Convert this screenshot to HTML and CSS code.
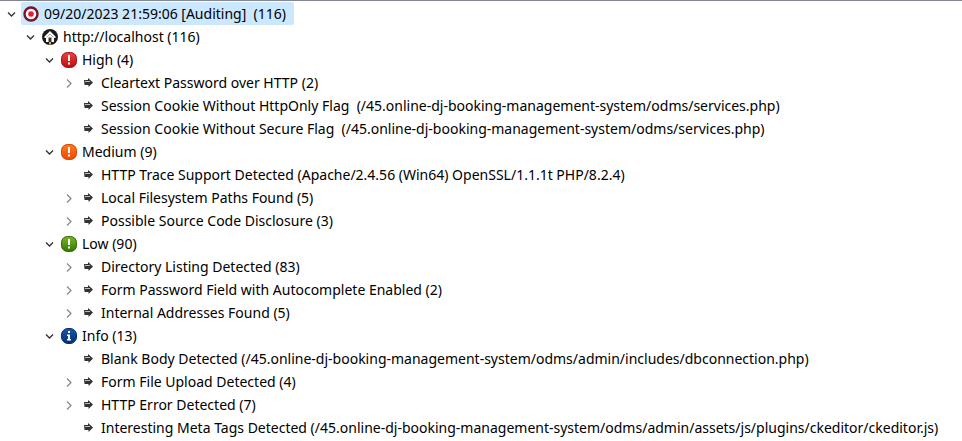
FILE: index.html
```html
<!DOCTYPE html>
<html lang="en">
<head>
<meta charset="utf-8">
<title>Scan Alerts</title>
<link rel="stylesheet" href="styles.css">
</head>
<body>
<svg class="sprite" aria-hidden="true">
  <defs>
    <linearGradient id="fade-red" x2="0" y2="1"><stop offset="0" stop-color="#f5403c"/><stop offset="1" stop-color="#b80e13"/></linearGradient>
    <linearGradient id="fade-orange" x2="0" y2="1"><stop offset="0" stop-color="#ff7a20"/><stop offset="1" stop-color="#ee4a02"/></linearGradient>
    <linearGradient id="fade-green" x2="0" y2="1"><stop offset="0" stop-color="#7cb52c"/><stop offset="1" stop-color="#327800"/></linearGradient>
    <linearGradient id="fade-blue" x2="0" y2="1"><stop offset="0" stop-color="#1a58a8"/><stop offset="1" stop-color="#032f79"/></linearGradient>
  </defs>
  <symbol id="open" viewBox="0 0 19 16"><path d="M6 6.5 9.5 10 13 6.5" fill="none" stroke="#303030" stroke-width="1.3"/></symbol>
  <symbol id="closed" viewBox="0 0 19 16"><path d="M8 4.5 12 8.5 8 12.5" fill="none" stroke="#8a8a8a" stroke-width="1.3"/></symbol>
  <symbol id="target" viewBox="0 0 16 16"><circle cx="8" cy="8" r="6.5" fill="#fff" stroke="#7d1022" stroke-width="2.4"/><circle cx="8" cy="8" r="2.8" fill="#e31b38"/></symbol>
  <symbol id="home" viewBox="0 0 16 16"><circle cx="8" cy="8" r="8" fill="#1b1b1b"/><path d="M8 2 2.5 7.5V9H4v4h8V9h1.5V7.5z" fill="#fff"/><path d="M4.5 8.5 8 5l3.5 3.5" fill="none" stroke="#999" stroke-width=".8"/><path d="M6.500 8.500h3V13h-3z" fill="#333"/><path d="M7 13h2v2.500H7z" fill="#f0a040"/></symbol>
  <symbol id="high" viewBox="0 0 16 16"><rect x=".5" y=".5" width="15" height="15" rx="6" fill="url(#fade-red)" stroke="#a40d14"/><path d="M7 3h2v6H7zM7 10.500h2v2H7z" fill="#fff"/></symbol>
  <symbol id="medium" viewBox="0 0 16 16"><rect x=".5" y=".5" width="15" height="15" rx="6" fill="url(#fade-orange)" stroke="#d14406"/><path d="M7 3h2v6H7zM7 10.500h2v2H7z" fill="#fff"/></symbol>
  <symbol id="low" viewBox="0 0 16 16"><rect x=".5" y=".5" width="15" height="15" rx="6" fill="url(#fade-green)" stroke="#2c6804"/><path d="M7 3h2v6H7zM7 10.500h2v2H7z" fill="#fff"/></symbol>
  <symbol id="info" viewBox="0 0 16 16"><rect x=".5" y=".5" width="15" height="15" rx="6.5" fill="url(#fade-blue)" stroke="#062c68"/><path d="M7 3h2v2H7zM6 6.500h3V11h1v1.500H6V11h1V8H6z" fill="#fff"/></symbol>
  <symbol id="arrow" viewBox="0 0 16 16"><path d="M4 5h4V3l5 4.500L8.500 12V10H4.500z" fill="#333"/><path d="M5 6.500h5" stroke="#bbb"/></symbol>
</svg>
<main class="panel">
<ul class="tree">
  <li>
    <div class="row"><button class="twisty" aria-label="Collapse"><svg><use href="#open"/></svg></button><span class="item selected"><svg class="icon"><use href="#target"/></svg><span>09/20/2023 21:59:06 [Auditing]&nbsp; (116)</span></span></div>
    <ul>
      <li>
        <div class="row"><button class="twisty" aria-label="Collapse"><svg><use href="#open"/></svg></button><span class="item"><svg class="icon"><use href="#home"/></svg><span>http://localhost (116)</span></span></div>
        <ul>
          <li>
            <div class="row"><button class="twisty" aria-label="Collapse"><svg><use href="#open"/></svg></button><span class="item"><svg class="icon"><use href="#high"/></svg><span>High (4)</span></span></div>
            <ul>
              <li class="row"><button class="twisty" aria-label="Expand"><svg><use href="#closed"/></svg></button><span class="item"><svg class="icon"><use href="#arrow"/></svg><span>Cleartext Password over HTTP (2)</span></span></li>
              <li class="row leaf"><span class="item"><svg class="icon"><use href="#arrow"/></svg><span>Session Cookie Without HttpOnly Flag&nbsp; (/45.online-dj-booking-management-system/odms/services.php)</span></span></li>
              <li class="row leaf"><span class="item"><svg class="icon"><use href="#arrow"/></svg><span>Session Cookie Without Secure Flag&nbsp; (/45.online-dj-booking-management-system/odms/services.php)</span></span></li>
            </ul>
          </li>
          <li>
            <div class="row"><button class="twisty" aria-label="Collapse"><svg><use href="#open"/></svg></button><span class="item"><svg class="icon"><use href="#medium"/></svg><span>Medium (9)</span></span></div>
            <ul>
              <li class="row leaf"><span class="item"><svg class="icon"><use href="#arrow"/></svg><span>HTTP Trace Support Detected (Apache/2.4.56 (Win64) OpenSSL/1.1.1t PHP/8.2.4)</span></span></li>
              <li class="row"><button class="twisty" aria-label="Expand"><svg><use href="#closed"/></svg></button><span class="item"><svg class="icon"><use href="#arrow"/></svg><span>Local Filesystem Paths Found (5)</span></span></li>
              <li class="row"><button class="twisty" aria-label="Expand"><svg><use href="#closed"/></svg></button><span class="item"><svg class="icon"><use href="#arrow"/></svg><span>Possible Source Code Disclosure (3)</span></span></li>
            </ul>
          </li>
          <li>
            <div class="row"><button class="twisty" aria-label="Collapse"><svg><use href="#open"/></svg></button><span class="item"><svg class="icon"><use href="#low"/></svg><span>Low (90)</span></span></div>
            <ul>
              <li class="row"><button class="twisty" aria-label="Expand"><svg><use href="#closed"/></svg></button><span class="item"><svg class="icon"><use href="#arrow"/></svg><span>Directory Listing Detected (83)</span></span></li>
              <li class="row"><button class="twisty" aria-label="Expand"><svg><use href="#closed"/></svg></button><span class="item"><svg class="icon"><use href="#arrow"/></svg><span>Form Password Field with Autocomplete Enabled (2)</span></span></li>
              <li class="row"><button class="twisty" aria-label="Expand"><svg><use href="#closed"/></svg></button><span class="item"><svg class="icon"><use href="#arrow"/></svg><span>Internal Addresses Found (5)</span></span></li>
            </ul>
          </li>
          <li>
            <div class="row"><button class="twisty" aria-label="Collapse"><svg><use href="#open"/></svg></button><span class="item"><svg class="icon"><use href="#info"/></svg><span>Info (13)</span></span></div>
            <ul>
              <li class="row leaf"><span class="item"><svg class="icon"><use href="#arrow"/></svg><span>Blank Body Detected (/45.online-dj-booking-management-system/odms/admin/includes/dbconnection.php)</span></span></li>
              <li class="row"><button class="twisty" aria-label="Expand"><svg><use href="#closed"/></svg></button><span class="item"><svg class="icon"><use href="#arrow"/></svg><span>Form File Upload Detected (4)</span></span></li>
              <li class="row"><button class="twisty" aria-label="Expand"><svg><use href="#closed"/></svg></button><span class="item"><svg class="icon"><use href="#arrow"/></svg><span>HTTP Error Detected (7)</span></span></li>
              <li class="row leaf"><span class="item"><svg class="icon"><use href="#arrow"/></svg><span>Interesting Meta Tags Detected (/45.online-dj-booking-management-system/odms/admin/assets/js/plugins/ckeditor/ckeditor.js)</span></span></li>
            </ul>
          </li>
        </ul>
      </li>
    </ul>
  </li>
</ul>
</main>
</body>
</html>
```
FILE: styles.css
```css
body {
  margin: 0;
  background: #fff;
  color: #000;
  font: 14px/23px "Noto Sans", "Open Sans", sans-serif;
}

.sprite {
  position: absolute;
  width: 0;
  height: 0;
}

.panel {
  border-top: 1px solid #828790;
  padding: 1px 2px 0;
  overflow: hidden;
}

ul {
  list-style: none;
  margin: 0;
  padding: 0;
}

.tree ul {
  padding-left: 19px;
}

.row {
  display: flex;
  height: 23px;
  white-space: nowrap;
}

.leaf {
  padding-left: 19px;
}

.twisty {
  display: flex;
  align-items: center;
  width: 19px;
  padding: 0;
  border: 0;
  background: none;
}

.twisty svg {
  width: 19px;
  height: 16px;
}

.item {
  display: flex;
  align-items: center;
  gap: 5px;
  padding: 0 8px 0 2px;
}

.selected {
  background: #cce8ff;
  border-radius: 2px;
}

.icon {
  flex: none;
  width: 16px;
  height: 16px;
}
```
